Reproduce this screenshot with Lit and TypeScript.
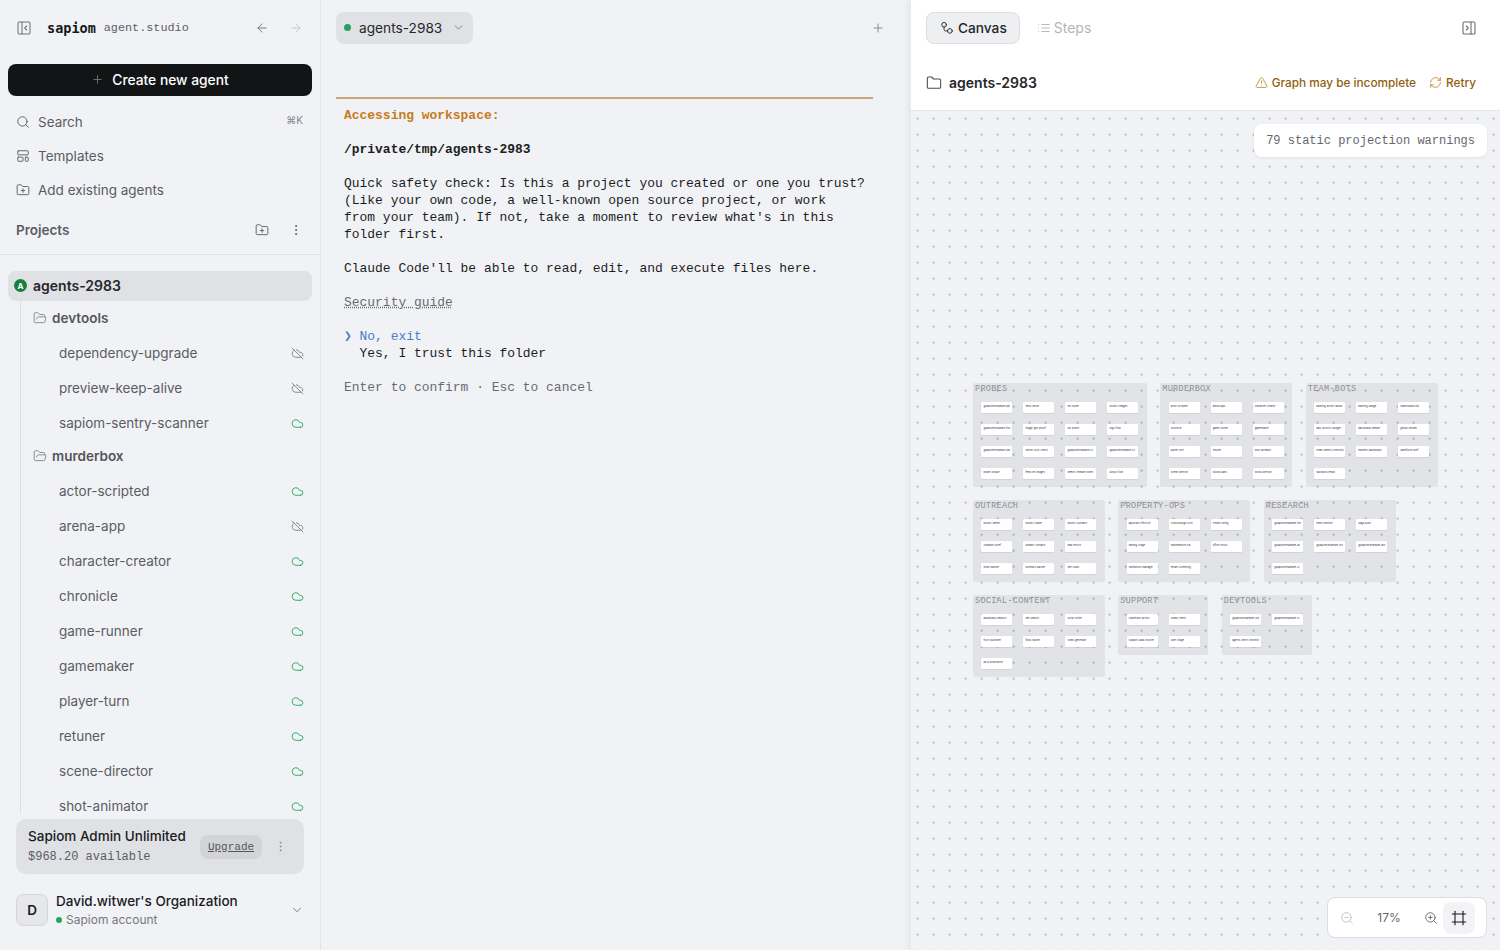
import { LitElement, html, css, svg } from 'lit';
import { customElement } from 'lit/decorators.js';

const ICONS: Record<string, unknown> = {
  panelLeft: svg`<rect x="3" y="3" width="18" height="18" rx="2"/><path d="M9 3v18"/><path d="m16 15-3-3 3-3"/>`,
  panelRight: svg`<rect x="3" y="3" width="18" height="18" rx="2"/><path d="M15 3v18"/><path d="m8 9 3 3-3 3"/>`,
  arrowLeft: svg`<path d="m12 19-7-7 7-7"/><path d="M19 12H5"/>`,
  arrowRight: svg`<path d="M5 12h14"/><path d="m12 5 7 7-7 7"/>`,
  plus: svg`<path d="M5 12h14"/><path d="M12 5v14"/>`,
  search: svg`<circle cx="11" cy="11" r="8"/><path d="m21 21-4.3-4.3"/>`,
  template: svg`<rect x="3" y="3" width="18" height="7" rx="1"/><rect x="3" y="14" width="9" height="7" rx="1"/><rect x="16" y="14" width="5" height="7" rx="1"/>`,
  folder: svg`<path d="M20 20a2 2 0 0 0 2-2V8a2 2 0 0 0-2-2h-7.9a2 2 0 0 1-1.69-.9L9.6 3.9A2 2 0 0 0 7.93 3H4a2 2 0 0 0-2 2v13a2 2 0 0 0 2 2Z"/>`,
  folderPlus: svg`<path d="M20 20a2 2 0 0 0 2-2V8a2 2 0 0 0-2-2h-7.9a2 2 0 0 1-1.69-.9L9.6 3.9A2 2 0 0 0 7.93 3H4a2 2 0 0 0-2 2v13a2 2 0 0 0 2 2Z"/><path d="M12 10v6"/><path d="M9 13h6"/>`,
  folderOpen: svg`<path d="m6 14 1.5-2.9A2 2 0 0 1 9.24 10H20a2 2 0 0 1 1.94 2.5l-1.54 6a2 2 0 0 1-1.95 1.5H4a2 2 0 0 1-2-2V5a2 2 0 0 1 2-2h3.9a2 2 0 0 1 1.69.9l.81 1.2a2 2 0 0 0 1.67.9H18a2 2 0 0 1 2 2v2"/>`,
  dots: svg`<circle cx="12" cy="5" r="1"/><circle cx="12" cy="12" r="1"/><circle cx="12" cy="19" r="1"/>`,
  cloud: svg`<path d="M17.5 19H9a7 7 0 1 1 6.71-9h1.79a4.5 4.5 0 1 1 0 9Z"/>`,
  cloudOff: svg`<path d="m2 2 20 20"/><path d="M5.782 5.782A7 7 0 0 0 9 19h8.5a4.5 4.5 0 0 0 1.307-.193"/><path d="M21.532 16.5A4.5 4.5 0 0 0 17.5 10h-1.79A7.008 7.008 0 0 0 10 5.07"/>`,
  chevron: svg`<path d="m6 9 6 6 6-6"/>`,
  canvas: svg`<circle cx="7" cy="6.5" r="4"/><circle cx="17" cy="17" r="4"/><path d="M7 10.5v4a2.5 2.5 0 0 0 2.5 2.5H13"/>`,
  list: svg`<path d="M3 6h.01"/><path d="M3 12h.01"/><path d="M3 18h.01"/><path d="M8 6h13"/><path d="M8 12h13"/><path d="M8 18h13"/>`,
  alert: svg`<path d="m21.73 18-8-14a2 2 0 0 0-3.48 0l-8 14A2 2 0 0 0 4 21h16a2 2 0 0 0 1.73-3"/><path d="M12 9v4"/><path d="M12 17h.01"/>`,
  refresh: svg`<path d="M3 12a9 9 0 0 1 9-9 9.75 9.75 0 0 1 6.74 2.74L21 8"/><path d="M21 3v5h-5"/><path d="M21 12a9 9 0 0 1-9 9 9.75 9.75 0 0 1-6.74-2.74L3 16"/><path d="M8 16H3v5"/>`,
  zoomIn: svg`<circle cx="11" cy="11" r="8"/><path d="m21 21-4.35-4.35"/><path d="M11 8v6"/><path d="M8 11h6"/>`,
  zoomOut: svg`<circle cx="11" cy="11" r="8"/><path d="m21 21-4.35-4.35"/><path d="M8 11h6"/>`,
  frame: svg`<path d="M22 6H2"/><path d="M22 18H2"/><path d="M6 2v20"/><path d="M18 2v20"/>`,
};

const icon = (name: string, size = 16, cls = '') => html`<svg
  class="ico ${cls}"
  width=${size}
  height=${size}
  viewBox="0 0 24 24"
  fill="none"
  stroke="currentColor"
  stroke-width="1.6"
  stroke-linecap="round"
  stroke-linejoin="round"
>${ICONS[name]}</svg>`;

const TREE = [
  {
    name: 'devtools',
    items: [
      ['dependency-upgrade', false],
      ['preview-keep-alive', false],
      ['sapiom-sentry-scanner', true],
    ],
  },
  {
    name: 'murderbox',
    items: [
      ['actor-scripted', true],
      ['arena-app', false],
      ['character-creator', true],
      ['chronicle', true],
      ['game-runner', true],
      ['gamemaker', true],
      ['player-turn', true],
      ['retuner', true],
      ['scene-director', true],
      ['shot-animator', true],
    ],
  },
] as { name: string; items: [string, boolean][] }[];

const TERMINAL_TOP = [
  'Quick safety check: Is this a project you created or one you trust?',
  '(Like your own code, a well-known open source project, or work',
  "from your team). If not, take a moment to review what's in this",
  'folder first.',
];

// graph groups sit on a free canvas, so these coordinates are the content
const GROUPS = [
  {
    name: 'PROBES', x: 61.7, y: 272, cols: 4,
    nodes: ['@sapiom/example-api', 'hello-world', 'llm-router', 'locality-images', '@sapiom/example-foo', 'image-gen-proof', 'llm-probe', 'logo-flow', '@sapiom/example-bar', 'notion-sync-check', '@sapiom/example-cli', '@sapiom/example-cli', 'probe-unique', 'feed-llm-images', 'weekly-release-notes', 'output-flow'],
  },
  {
    name: 'MURDERBOX', x: 249, y: 272, cols: 3,
    nodes: ['actor-scripted', 'arena-app', 'character-creator', 'chronicle', 'game-runner', 'gamemaker', 'player-turn', 'retuner', 'shot-animator', 'scene-director', 'sound-bank', 'world-director'],
  },
  {
    name: 'TEAM-BOTS', x: 394.5, y: 272, cols: 3,
    nodes: ['banking-action-hands', 'banking-badge', 'caseyboard-bot', 'daily-activity-budget', 'dashboard-keeper', 'github-sender', 'linear-weekly-checklist', 'markets-dashboard', 'salesforce-pref', 'slackbots-email'],
  },
  {
    name: 'OUTREACH', x: 61.7, y: 389, cols: 3,
    nodes: ['bounty-detect', 'bounty-intake', 'bounty-outreach', 'company-brief', 'domain-contacts', 'lead-enrich', 'order-banner', 'outreach-packet', 'site-crawl'],
  },
  {
    name: 'PROPERTY-OPS', x: 207, y: 389, cols: 3,
    nodes: ['applicant-lifecycle', 'AvidXchange-sync', 'create-listing', 'leasing-triage', 'maintenance-sla', 'office-hours', 'operations-manager', 'tenant-screening'],
  },
  {
    name: 'RESEARCH', x: 352.5, y: 389, cols: 3,
    nodes: ['@sapiom/example-file', 'news-monitor', 'saga-audit', '@sapiom/example-ax', '@sapiom/example-ocr', '@sapiom/example-ask', '@sapiom/example-ui'],
  },
  {
    name: 'SOCIAL-CONTENT', x: 61.7, y: 484, cols: 3,
    nodes: ['dashboard-deploys', 'dev-search', 'script-writer', 'flickr-publisher', 'food-tracker', 'video-generator', 'ad-a-brainstorm'],
  },
  {
    name: 'SUPPORT', x: 207, y: 484, cols: 2,
    nodes: ['chatterbot-action', 'ocean-intent', 'support-data-shuttler', 'uber-triage'],
  },
  {
    name: 'DEVTOOLS', x: 310.5, y: 484, cols: 2,
    nodes: ['@sapiom/example-oto', '@sapiom/example-cr', 'agents-sentry-monitor'],
  },
];

@customElement('app-root')
export class AppRoot extends LitElement {
  static styles = css`
    :host {
      display: flex;
      width: 100%;
      height: 100vh;
      overflow: hidden;
      background: #f1f2f6;
      color: #1a1b1e;
      font-family: Inter, 'Liberation Sans', sans-serif;
      font-size: 13.5px;
    }
    .ico {
      flex: none;
      display: block;
    }
    .mono {
      font-family: 'Liberation Mono', 'DejaVu Sans Mono', monospace;
    }

    /* sidebar */
    .side {
      width: 320px;
      flex: none;
      display: flex;
      flex-direction: column;
      border-right: 1px solid #e2e3e7;
      box-sizing: content-box;
    }
    .brand {
      height: 56px;
      display: flex;
      align-items: center;
      padding: 0 16px;
      color: #74757b;
    }
    .logo {
      margin-left: 15px;
      font-family: 'DejaVu Sans Mono', monospace;
      font-size: 13.5px;
      font-weight: 700;
      color: #17181a;
    }
    .tag {
      margin-left: 8px;
      font-size: 11.8px;
      color: #5d5e64;
    }
    .nav-arrows {
      margin-left: auto;
      display: flex;
      gap: 20px;
      padding-right: 1px;
    }
    .dim {
      color: #c2c3c8;
    }
    .create {
      margin: 8px 8px 9px;
      height: 32px;
      padding-bottom: 1px;
      box-sizing: border-box;
      display: flex;
      align-items: center;
      justify-content: center;
      gap: 8px;
      border-radius: 8px;
      background: #131416;
      color: #fff;
      font-size: 13.8px;
      font-weight: 500;
    }
    .create .ico {
      color: #5d8a66;
    }
    .nav {
      height: 34px;
      display: flex;
      align-items: center;
      gap: 8px;
      padding: 0 17px 1px 16px;
      box-sizing: border-box;
      color: #5b5c63;
    }
    .kbd {
      margin-left: auto;
      font-size: 10px;
      color: #85868c;
      margin-top: -3px;
    }
    .projects {
      margin-top: 5px;
      height: 36px;
      display: flex;
      align-items: center;
      padding: 0 17px 1px 16px;
      box-sizing: border-box;
      color: #5b5c63;
      font-weight: 600;
    }
    .projects .acts {
      margin-left: auto;
      display: flex;
      align-items: center;
      gap: 20px;
    }
    .divider {
      margin-top: 6px;
      height: 1px;
      background: #e0e1e5;
    }
    .tree {
      flex: 1;
      min-height: 0;
      overflow: hidden;
      padding: 16px 8px 0;
      margin-bottom: 6px;
    }
    .root {
      height: 30px;
      padding: 0 0 1px 6px;
      box-sizing: border-box;
      display: flex;
      align-items: center;
      gap: 6px;
      border-radius: 8px;
      background: #e0e1e5;
      font-size: 14px;
      font-weight: 600;
      color: #26272b;
    }
    .badge {
      width: 13px;
      height: 13px;
      border-radius: 50%;
      background: #15803d;
      color: #fff;
      font-size: 8px;
      font-weight: 700;
      display: flex;
      align-items: center;
      justify-content: center;
    }
    .branch {
      margin-left: 12px;
      border-left: 1px solid #dcdde1;
      padding-left: 12px;
    }
    .group {
      height: 34px;
      display: flex;
      align-items: center;
      gap: 5px;
      color: #55565c;
      font-weight: 600;
    }
    .group.next {
      margin-top: -1px;
    }
    .group .ico {
      color: #85868c;
    }
    .leaf {
      height: 35px;
      display: flex;
      align-items: center;
      justify-content: space-between;
      padding: 0 8px 0 26px;
      color: #5b5c63;
    }
    .leaf .ico {
      margin-top: 1px;
      color: #7b7c82;
    }
    .leaf .ico.on {
      color: #22a559;
    }
    .plan {
      margin: 0 16px;
      height: 55px;
      display: flex;
      align-items: center;
      padding: 0 12px;
      border-radius: 10px;
      background: #e0e1e5;
    }
    .plan-text {
      width: 162px;
      flex: none;
    }
    .plan-title {
      font-weight: 500;
      white-space: nowrap;
      overflow: hidden;
      text-overflow: ellipsis;
      line-height: 20px;
    }
    .plan-sub {
      font-size: 12px;
      line-height: 20px;
      margin-top: 1px;
      color: #5b5c63;
    }
    .upgrade {
      margin-left: 10px;
      width: 62px;
      height: 24px;
      display: flex;
      align-items: center;
      justify-content: center;
      border-radius: 8px;
      background: #d3d4d8;
      font-size: 11px;
      color: #55565c;
      text-decoration: underline;
    }
    .plan > .ico {
      margin-left: 12px;
      color: #8b8c92;
    }
    .org {
      margin: 20px 16px 24px;
      height: 32px;
      display: flex;
      align-items: center;
      gap: 8px;
    }
    .avatar {
      width: 30px;
      height: 30px;
      flex: none;
      display: flex;
      align-items: center;
      justify-content: center;
      border: 1px solid #d5d6da;
      border-radius: 7px;
      background: #e6e7ea;
      font-weight: 600;
    }
    .org-text {
      margin-top: 2px;
    }
    .org-name {
      font-weight: 500;
      line-height: 18px;
    }
    .org-sub {
      display: flex;
      align-items: center;
      gap: 4px;
      font-size: 12px;
      line-height: 20px;
      color: #76777d;
    }
    .dot {
      width: 6px;
      height: 6px;
      border-radius: 50%;
      background: #22a559;
    }
    .org > .ico {
      margin-left: auto;
      color: #74757b;
    }

    /* terminal */
    .term {
      flex: none;
      width: 589px;
      padding: 12px 0 0 15px;
      box-sizing: border-box;
    }
    .term-bar {
      display: flex;
      align-items: center;
      height: 32px;
      padding-right: 25px;
    }
    .tab {
      height: 32px;
      display: flex;
      align-items: center;
      gap: 8px;
      padding: 0 8px 1px;
      box-sizing: border-box;
      border-radius: 8px;
      background: #e0e1e5;
      font-size: 13.7px;
      color: #26272b;
    }
    .tab .dot {
      width: 7px;
      height: 7px;
    }
    .tab .ico {
      margin-left: 2px;
      color: #7b7c82;
    }
    .term-add {
      margin-left: auto;
      color: #85868c;
    }
    .rule {
      margin-top: 53px;
      width: 537px;
      height: 2px;
      background: #c9a57c;
    }
    .out {
      padding: 8px 0 0 8px;
      font-size: 12.96px;
      line-height: 17px;
      white-space: pre;
      color: #1c1d20;
    }
    .warn {
      color: #c77c1c;
      font-weight: 700;
    }
    .path {
      font-weight: 700;
    }
    .guide {
      color: #6a6b71;
      text-decoration: underline dotted;
    }
    .sel {
      color: #4a7cc9;
    }
    .hint {
      color: #6a6b71;
    }

    /* canvas panel */
    .panel {
      flex: 1;
      min-width: 0;
      display: flex;
      flex-direction: column;
      background: #fff;
      box-shadow: -2px 0 6px rgba(0, 0, 0, 0.06);
      border-left: 1px solid #e8e9ec;
    }
    .panel-tabs {
      height: 32px;
      padding: 12px 23px 0 15px;
      display: flex;
      align-items: center;
      gap: 17px;
    }
    .pill {
      height: 32px;
      display: flex;
      align-items: center;
      gap: 5px;
      padding: 0 12px 1px;
      box-sizing: border-box;
      border: 1px solid #dcdde1;
      border-radius: 8px;
      background: #eeeff1;
      font-size: 13.7px;
      font-weight: 500;
      color: #26272b;
    }
    .pill .ico {
      margin-left: 1px;
      margin-right: -1px;
    }
    .steps {
      display: flex;
      align-items: center;
      gap: 3px;
      padding-bottom: 1px;
      font-size: 14px;
      color: #b4b5ba;
    }
    .panel-tabs > .ico {
      margin-left: auto;
      color: #6a6b71;
    }
    .title {
      height: 67px;
      padding: 11px 24px 0 15px;
      box-sizing: border-box;
      display: flex;
      align-items: center;
      border-bottom: 1px solid #e4e5e9;
    }
    .title > .ico {
      color: #4b4c52;
    }
    .title-name {
      margin-left: 7px;
      font-size: 14px;
      font-weight: 600;
      color: #26272b;
    }
    .status {
      margin-left: auto;
      display: flex;
      align-items: center;
      gap: 4px;
      font-size: 11.8px;
      font-weight: 500;
      color: #8f5f0e;
    }
    .status .ico {
      color: #c08a2c;
    }
    .status .retry {
      margin-left: 9px;
    }
    .board {
      flex: 1;
      position: relative;
      overflow: hidden;
      background-color: #f1f2f6;
      background-image: radial-gradient(circle at center, #bbbcc1 0, #bbbcc1 0.85px, transparent 1.15px);
      background-size: 16px 16px;
      background-position: 14.67px 15.67px;
    }
    .chip {
      position: absolute;
      top: 13px;
      right: 13px;
      height: 33px;
      display: flex;
      align-items: center;
      padding: 0 12px;
      border-radius: 8px;
      background: #fff;
      box-shadow: 0 1px 3px rgba(0, 0, 0, 0.08);
      font-size: 12px;
      color: #66676d;
    }
    .zoom {
      position: absolute;
      right: 13px;
      bottom: 12px;
      width: 160px;
      height: 41px;
      box-sizing: border-box;
      display: flex;
      align-items: center;
      padding: 0 3px 0 12px;
      border: 1px solid #dcdde1;
      border-radius: 8px;
      background: #fff;
      color: #66676d;
    }
    .zoom-pct {
      width: 70px;
      text-align: center;
      font-size: 12px;
    }
    .zoom .off {
      color: #bdbec3;
    }
    .fit {
      margin-left: 5px;
      width: 32px;
      height: 32px;
      display: flex;
      align-items: center;
      justify-content: center;
      border-radius: 8px;
      background: #f3f3f5;
      color: #17181a;
    }
    .cluster {
      position: absolute;
      padding: 0 8.7px 8.6px;
      border-radius: 2px;
      background: rgba(40, 42, 60, 0.075);
    }
    .cluster-name {
      height: 19.3px;
      margin-left: -6.4px;
      font-size: 8.5px;
      line-height: 13px;
      letter-spacing: 0.3px;
      color: #8e8f95;
      white-space: nowrap;
    }
    .cluster-grid {
      display: grid;
      grid-auto-rows: 10.6px;
      gap: 11.3px 11px;
    }
    .node {
      width: 31px;
      height: 10.6px;
      padding-left: 2px;
      box-sizing: border-box;
      overflow: hidden;
      border-radius: 1px;
      background: #fff;
      box-shadow: 0 0.3px 0.8px rgba(0, 0, 0, 0.08);
      font-size: 2.5px;
      line-height: 10.6px;
      white-space: nowrap;
      color: #333;
    }
  `;

  private _tree() {
    return html`
      <div class="tree">
        <div class="root"><span class="badge">A</span>agents-2983</div>
        <div class="branch">
          ${TREE.map(
            (g, i) => html`
              <div class="group ${i ? 'next' : ''}">${icon('folderOpen', 14)}${g.name}</div>
              ${g.items.map(
                ([name, on]) => html`
                  <div class="leaf">
                    ${name}${icon(on ? 'cloud' : 'cloudOff', 13, on ? 'on' : '')}
                  </div>
                `,
              )}
            `,
          )}
        </div>
      </div>
    `;
  }

  private _sidebar() {
    return html`
      <aside class="side">
        <div class="brand">
          ${icon('panelLeft', 16)}
          <span class="logo">sapiom</span>
          <span class="tag mono">agent.studio</span>
          <div class="nav-arrows">${icon('arrowLeft', 14)}${icon('arrowRight', 14, 'dim')}</div>
        </div>
        <div class="create">${icon('plus', 13)}Create new agent</div>
        <div class="nav">${icon('search', 14)}Search<span class="kbd">⌘K</span></div>
        <div class="nav">${icon('template', 14)}Templates</div>
        <div class="nav">${icon('folderPlus', 14)}Add existing agents</div>
        <div class="projects">
          Projects
          <div class="acts">${icon('folderPlus', 14)}${icon('dots', 14)}</div>
        </div>
        <div class="divider"></div>
        ${this._tree()}
        <div class="plan">
          <div class="plan-text">
            <div class="plan-title">Sapiom Admin Unlimited</div>
            <div class="plan-sub mono">$968.20 available</div>
          </div>
          <span class="upgrade mono">Upgrade</span>
          ${icon('dots', 13)}
        </div>
        <div class="org">
          <div class="avatar">D</div>
          <div class="org-text">
            <div class="org-name">David.witwer's Organization</div>
            <div class="org-sub"><span class="dot"></span>Sapiom account</div>
          </div>
          ${icon('chevron', 14)}
        </div>
      </aside>
    `;
  }

  private _terminal() {
    return html`
      <main class="term">
        <div class="term-bar">
          <div class="tab">
            <span class="dot"></span>agents-2983${icon('chevron', 13)}
          </div>
          <span class="term-add">${icon('plus', 14)}</span>
        </div>
        <div class="rule"></div>
        <div class="out mono"><div class="warn">Accessing workspace:</div><br /><div class="path">/private/tmp/agents-2983</div><br />${TERMINAL_TOP.map(
          (line) => html`<div>${line}</div>`,
        )}<br /><div>Claude Code'll be able to read, edit, and execute files here.</div><br /><div><span class="guide">Security guide</span></div><br /><div class="sel">❯ No, exit</div><div>  Yes, I trust this folder</div><br /><div class="hint">Enter to confirm · Esc to cancel</div></div>
      </main>
    `;
  }

  private _canvas() {
    return html`
      <section class="panel">
        <div class="panel-tabs">
          <div class="pill">${icon('canvas', 14)}Canvas</div>
          <div class="steps">${icon('list', 14)}Steps</div>
          ${icon('panelRight', 16)}
        </div>
        <div class="title">
          ${icon('folder', 16)}
          <span class="title-name">agents-2983</span>
          <div class="status">
            ${icon('alert', 13)}Graph may be incomplete
            <span class="retry">${icon('refresh', 13)}</span>Retry
          </div>
        </div>
        <div class="board">
          ${GROUPS.map(
            (g) => html`
              <div class="cluster" style=${`left:${g.x}px;top:${g.y}px`}>
                <div class="cluster-name mono">${g.name}</div>
                <div class="cluster-grid" style=${`grid-template-columns:repeat(${g.cols},31px)`}>
                  ${g.nodes.map((n) => html`<div class="node">${n}</div>`)}
                </div>
              </div>
            `,
          )}
          <div class="chip mono">79 static projection warnings</div>
          <div class="zoom">
            <span class="off">${icon('zoomOut', 14)}</span>
            <span class="zoom-pct">17%</span>
            ${icon('zoomIn', 14)}
            <span class="fit">${icon('frame', 16)}</span>
          </div>
        </div>
      </section>
    `;
  }

  render() {
    return html`${this._sidebar()}${this._terminal()}${this._canvas()}`;
  }
}

declare global {
  interface HTMLElementTagNameMap {
    'app-root': AppRoot;
  }
}
